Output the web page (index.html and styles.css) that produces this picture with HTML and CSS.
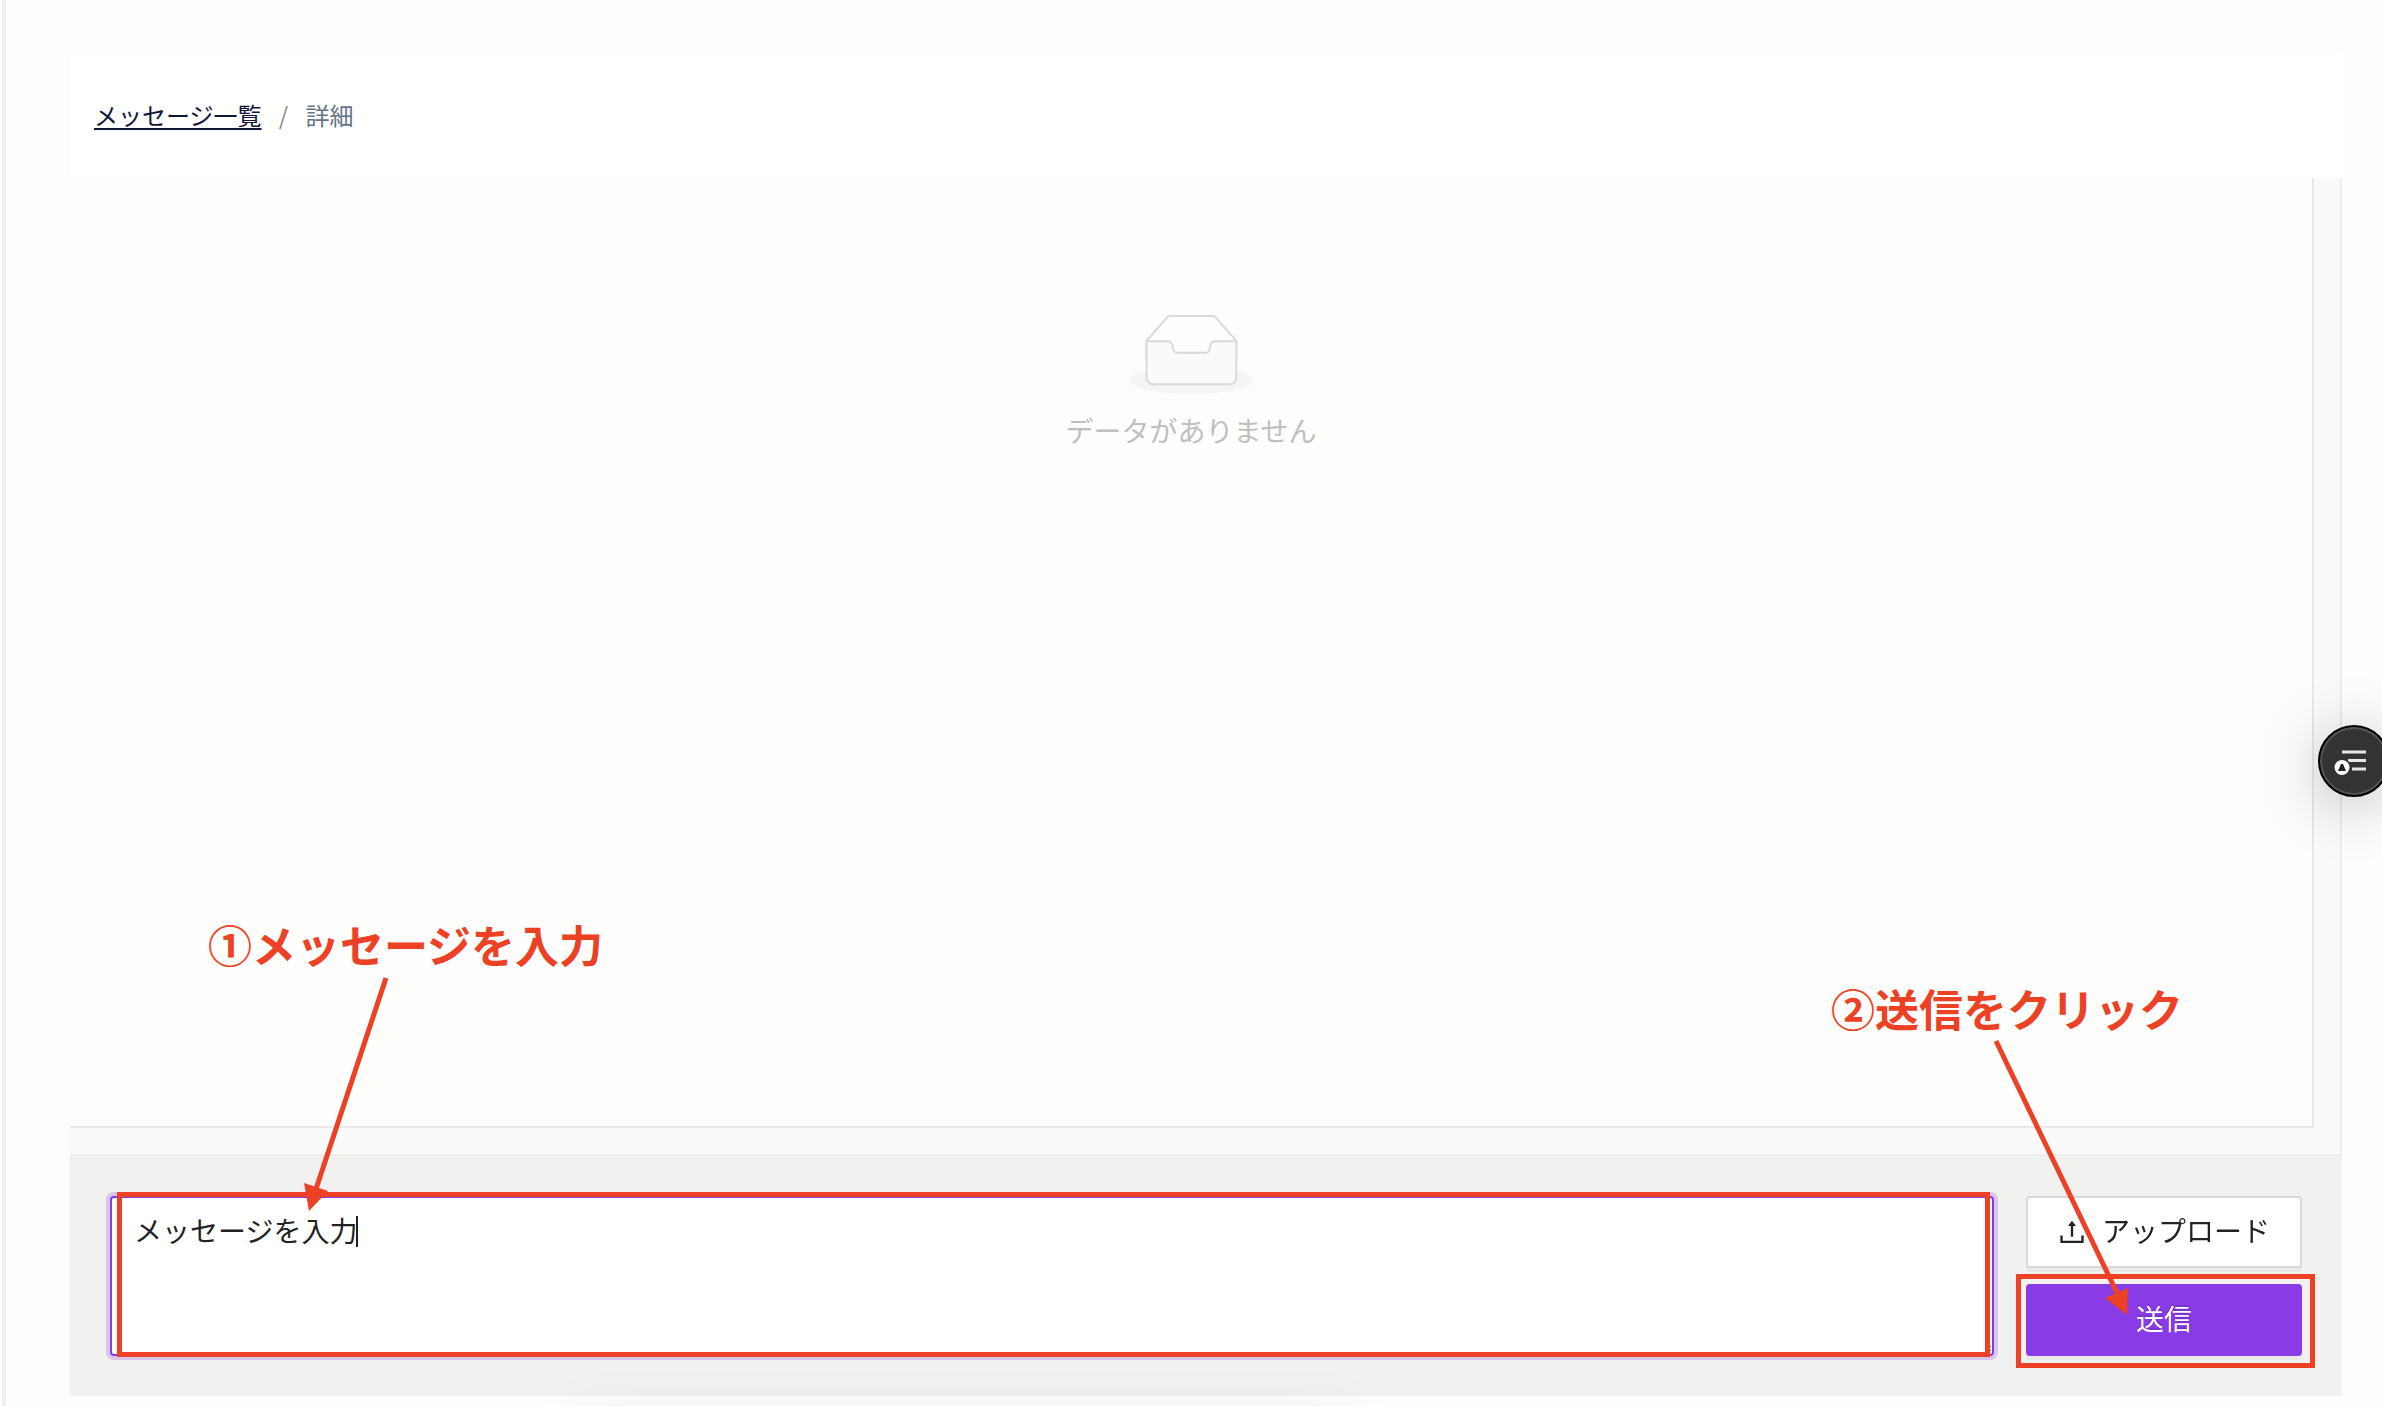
FILE: index.html
```html
<!DOCTYPE html>
<html lang="ja">
<head>
    <meta charset="UTF-8">
    <meta name="viewport" content="width=device-width, initial-scale=1.0">
    <title>メッセージ詳細</title>
    <link rel="stylesheet" href="styles.css">
</head>
<body>
    <main class="page">
        <nav class="breadcrumb">
            <a href="#">メッセージ一覧</a>
            <span class="separator">/</span>
            <span class="current">詳細</span>
        </nav>

        <section class="messages">
            <div class="message-list">
                <div class="empty">
                    <svg class="empty-image" viewBox="0 0 64 41">
                        <g transform="translate(0 1)" fill="none" fill-rule="evenodd">
                            <ellipse fill="#f5f5f5" cx="32" cy="33" rx="32" ry="7"/>
                            <g fill-rule="nonzero" stroke="#d9d9d9">
                                <path d="M55 12.76L44.854 1.258C44.367.474 43.656 0 42.907 0H21.093c-.749 0-1.46.474-1.947 1.257L9 12.761V22h46v-9.24z"/>
                                <path fill="#fafafa" d="M41.613 15.931c0-1.605.994-2.93 2.227-2.931H55v18.137C55 33.26 53.68 35 52.05 35h-40.1C10.32 35 9 33.259 9 31.137V13h11.16c1.233 0 2.227 1.323 2.227 2.928v.022c0 1.605 1.005 2.901 2.237 2.901h14.752c1.232 0 2.237-1.308 2.237-2.913v-.007z"/>
                            </g>
                        </g>
                    </svg>
                    <p>データがありません</p>
                </div>
            </div>
            <div class="track-y"></div>
            <div class="track-x"></div>
        </section>

        <form class="composer">
            <div class="field">
                <textarea id="message" aria-label="メッセージ" autofocus>メッセージを入力</textarea>
                <span class="caret"></span>
                <div class="mark mark-field"></div>
                <div class="note note-field">①メッセージを入力</div>
                <svg class="arrow arrow-field" viewBox="0 0 100 240">
                    <path class="line" d="M86 8L15 222"/>
                    <path class="head" d="M4 213L28 221L9 241z"/>
                </svg>
            </div>
            <div class="actions">
                <button type="button" class="upload">
                    <svg viewBox="64 64 896 896">
                        <path d="M400 317.7h73.9V656c0 4.4 3.6 8 8 8h60c4.4 0 8-3.6 8-8V317.7H624c6.7 0 10.4-7.7 6.3-12.9L518.3 163a8 8 0 00-12.6 0l-112 141.7c-4.1 5.3-.4 13 6.3 13zM878 626h-60c-4.4 0-8 3.6-8 8v154H214V634c0-4.4-3.6-8-8-8h-60c-4.4 0-8 3.6-8 8v198c0 17.7 14.3 32 32 32h684c17.7 0 32-14.3 32-32V634c0-4.4-3.6-8-8-8z"/>
                    </svg>
                    <span>アップロード</span>
                </button>
                <button type="button" class="send"><span>送信</span></button>
                <div class="mark mark-send"></div>
                <div class="note note-send">②送信をクリック</div>
                <svg class="arrow arrow-send" viewBox="0 0 150 280">
                    <path class="line" d="M10 2L132 256"/>
                    <path class="head" d="M119 259L142 249L141 276z"/>
                </svg>
            </div>
        </form>
    </main>

    <button class="float-button" aria-label="メニュー">
        <svg viewBox="2 2 68 68">
            <path d="M24 27h24M30 35.500h18M34 44h14" stroke="#e6e6e6" stroke-width="3"/>
            <circle cx="24" cy="42.500" r="9" fill="#333"/>
            <circle cx="24" cy="42.500" r="7.500" fill="#fff"/>
            <path d="M23 39h2l3 7h-8z" fill="#222"/>
        </svg>
    </button>
    <div class="bottom-shade"></div>
</body>
</html>
```

FILE: styles.css
```css
* {
    box-sizing: border-box;
}
body {
    margin: 0;
    background: #fdfdfb;
    color: #222;
    font-family: "Noto Sans CJK JP", sans-serif;
    font-size: 28px;
    line-height: 44px;
}
.page {
    display: flex;
    flex-direction: column;
    min-height: 100vh;
    margin-left: 2px;
    padding: 54px 40px 10px 64px;
    border-left: 4px solid #eeeeeb;
}

/* breadcrumb */
.breadcrumb {
    display: flex;
    align-items: center;
    gap: 16px;
    height: 124px;
    padding: 0 24px 3px;
    background: #fff;
    font-size: 24px;
}
.breadcrumb a {
    color: #0f1639;
    text-decoration: underline;
    text-decoration-thickness: 2px;
    text-underline-offset: 3px;
}
.separator {
    width: 12px;
    color: #8c8c8c;
    text-align: center;
}
.current {
    color: #64748b;
}

/* message list with its scroll tracks */
.messages {
    flex: 1;
    display: grid;
    grid-template-columns: 1fr 30px;
    grid-template-rows: 1fr 30px;
    background: #fafafa;
}
.track-y {
    border-left: 2px solid #e8e8e8;
    border-right: 2px solid #ededed;
}
.track-x {
    grid-column: 1 / 3;
    display: flex;
    border-right: 2px solid #ededed;
    border-bottom: 2px solid #ededed;
}
.track-x::before {
    content: "";
    flex: 1;
    margin-right: 26px;
    border-top: 2px solid #e8e8e8;
}
.message-list {
    padding-top: 136px;
    background: #fdfdfc;
}
.empty {
    display: flex;
    flex-direction: column;
    align-items: center;
    gap: 14px;
    color: #bfbfbf;
}
.empty-image {
    height: 80px;
}
.empty p {
    margin: 0;
}

/* composer */
.composer {
    display: flex;
    gap: 32px;
    padding: 40px;
    background: #f1f1f0;
}
.field {
    flex: 1;
    position: relative;
    display: flex;
}
textarea {
    flex: 1;
    height: 160px;
    padding: 10px 22px;
    border: 2px solid #893be5;
    border-radius: 4px;
    outline: none;
    box-shadow: 0 0 0 4px #d8c6ec;
    background: #fff;
    color: #222;
    font: inherit;
    caret-color: transparent;
}
.caret {
    position: absolute;
    top: 20px;
    left: 246px;
    width: 2px;
    height: 31px;
    background: #222;
}
.actions {
    position: relative;
    display: flex;
    flex-direction: column;
    gap: 16px;
    width: 276px;
}
.actions button {
    display: flex;
    align-items: center;
    justify-content: center;
    gap: 16px;
    height: 72px;
    padding: 0;
    border: 2px solid #d9d9d9;
    border-radius: 4px;
    box-shadow: 0 4px 0 rgba(0, 0, 0, 0.03);
    background: #fff;
    color: #222;
    font: inherit;
}
.actions button span {
    padding-bottom: 4px;
}
.upload svg {
    width: 28px;
    height: 28px;
    fill: #222;
}
.actions .send {
    border-color: #893be5;
    background: #893be5;
    color: #fff;
    text-shadow: 0 -2px 0 rgba(0, 0, 0, 0.12);
}

/* red guide notes */
.mark,
.note,
.arrow {
    position: absolute;
    pointer-events: none;
}
.mark {
    border: 5px solid #ec4125;
}
.mark-field {
    inset: -4px 4px -1px 7px;
}
.mark-send {
    inset: 78px -13px -12px -10px;
}
.note {
    color: #ec4125;
    font-size: 44px;
    font-weight: 700;
    line-height: 60px;
    white-space: nowrap;
}
.note-field {
    top: -282px;
    left: 98px;
}
.note-send {
    top: -218px;
    right: 119px;
}
.arrow {
    overflow: visible;
}
.arrow .line {
    stroke: #ec4125;
    stroke-width: 5;
}
.arrow .head {
    fill: #ec4125;
}
.arrow-field {
    top: -226px;
    left: 190px;
    width: 100px;
    height: 240px;
}
.arrow-send {
    top: -157px;
    left: -40px;
    width: 150px;
    height: 280px;
}

.float-button {
    position: fixed;
    top: 725px;
    right: -8px;
    width: 72px;
    height: 72px;
    padding: 0;
    border: 2px solid #000;
    border-radius: 50%;
    box-shadow: inset 0 0 0 2px #555, 0 8px 60px rgba(0, 0, 0, 0.25);
    background: #333;
}
.float-button svg {
    display: block;
    width: 68px;
    height: 68px;
}
.bottom-shade {
    position: fixed;
    top: 100%;
    left: 24%;
    width: 33%;
    height: 60px;
    box-shadow: 0 8px 60px rgba(0, 0, 0, 0.06);
    pointer-events: none;
}
```
